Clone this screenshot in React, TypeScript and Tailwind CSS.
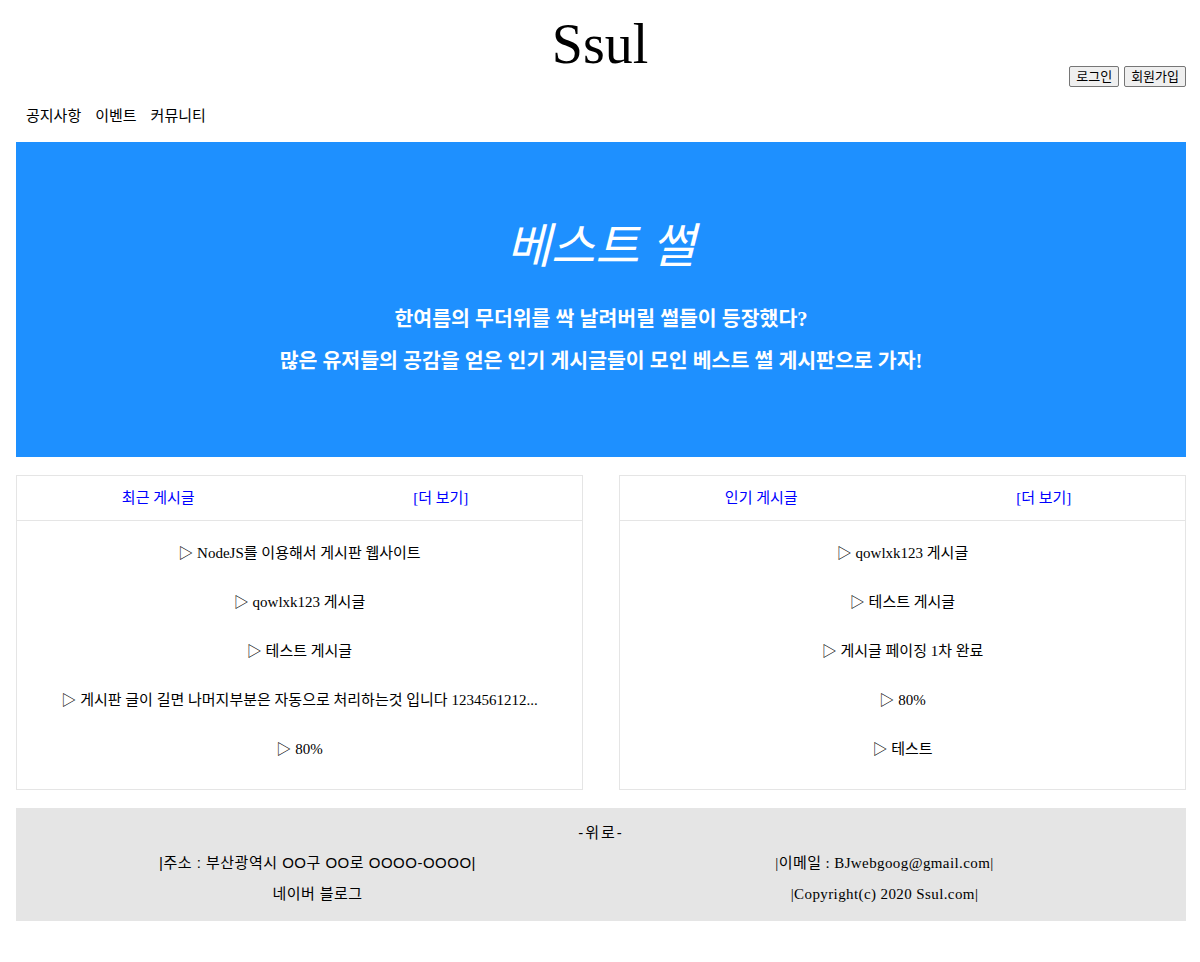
import React from "react";

const serif = "font-['Liberation_Serif','Noto_Sans_CJK_KR',serif]";
const sans = "font-['Liberation_Sans','Noto_Sans_CJK_KR',sans-serif]";

const recent = [
  "NodeJS를 이용해서 게시판 웹사이트",
  "qowlxk123 게시글",
  "테스트 게시글",
  "게시판 글이 길면 나머지부분은 자동으로 처리하는것 입니다 1234561212...",
  "80%",
];
const popular = ["qowlxk123 게시글", "테스트 게시글", "게시글 페이징 1차 완료", "80%", "테스트"];

function Card({ title, items }: { title: string; items: string[] }) {
  return (
    <div className="border border-[#e5e5e5] h-[315px] flex flex-col">
      <div className="h-[45px] border-b border-[#e5e5e5] grid grid-cols-2 items-center text-[15px] leading-[20px]">
        <a href="#" className="text-center text-[#0000ff]">{title}</a>
        <a href="#" className="text-center text-[#0000ff]">[더 보기]</a>
      </div>
      <ul className="pt-[8px] pb-[15px] text-[15px] text-black">
        {items.map((t, i) => (
          <li key={i} className="h-[49px] flex items-center justify-center">
            ▷ {t}
          </li>
        ))}
      </ul>
    </div>
  );
}

export default function App() {
  return (
    <div className={`${serif} bg-white text-black min-h-[962px]`}>
      <header>
        <h1 className="text-center text-[56px] pt-[22px] leading-[44px] h-[66px] font-normal">Ssul</h1>
        <div className="flex justify-end gap-[5px] pr-[14px] h-[21px]">
          <button className={`${sans} text-[13px] leading-[17px] px-[6px] bg-[#efefef] border border-[#767676] rounded-[2px]`}>로그인</button>
          <button className={`${sans} text-[13px] leading-[17px] px-[6px] bg-[#efefef] border border-[#767676] rounded-[2px]`}>회원가입</button>
        </div>
        <nav className={`${sans} h-[55px] pt-[19px] pl-[26px] flex gap-[14px] text-[15px] leading-[20px]`}>
          <a href="#">공지사항</a>
          <a href="#">이벤트</a>
          <a href="#">커뮤니티</a>
        </nav>
      </header>
      <main className="pl-4 pr-[14px]">
        <section className="bg-[#1e90ff] h-[315px] flex flex-col items-center text-white pt-[80px]">
          <h2 className="italic text-[48px] leading-[50px] font-normal">베스트 썰</h2>
          <p className="mt-[33px] text-[20.5px] leading-[28px] font-bold">한여름의 무더위를 싹 날려버릴 썰들이 등장했다?</p>
          <p className="mt-[14px] text-[20.5px] leading-[28px] font-bold">많은 유저들의 공감을 얻은 인기 게시글들이 모인 베스트 썰 게시판으로 가자!</p>
        </section>
        <div className="grid grid-cols-2 gap-[36px] mt-[18px]">
          <Card title="최근 게시글" items={recent} />
          <Card title="인기 게시글" items={popular} />
        </div>
        <footer className="bg-[#e5e5e5] mt-[18px] h-[113px] pt-[15px] px-[18px] text-[15px] leading-[20px] tracking-[0.4px]">
          <div className={`${sans} text-center tracking-[2px]`}>-위로-</div>
          <div className="grid grid-cols-2 mt-[10px]">
            <div className={`${sans} text-center flex flex-col gap-[11px]`}>
              <span className="tracking-[0.5px]">|주소 : 부산광역시 OO구 OO로 OOOO-OOOO|</span>
              <span>네이버 블로그</span>
            </div>
            <div className="text-center flex flex-col gap-[11px]">
              <span>|이메일 : BJwebgoog@gmail.com|</span>
              <span>|Copyright(c) 2020 Ssul.com|</span>
            </div>
          </div>
        </footer>
      </main>
    </div>
  );
}
